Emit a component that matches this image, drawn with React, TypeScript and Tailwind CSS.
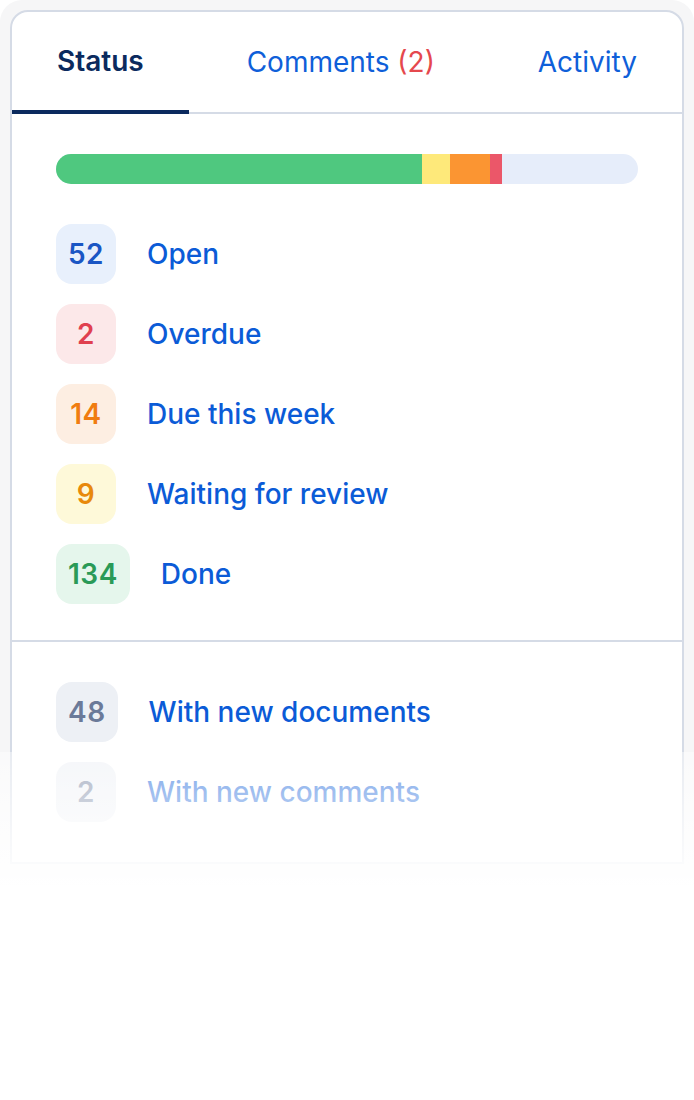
import React from 'react'

type Row = { count: number; label: string; badge: string }

const STATUS_ROWS: Row[] = [
  { count: 52, label: 'Open', badge: 'bg-[#e8f0fc] text-[#1a56c4]' },
  { count: 2, label: 'Overdue', badge: 'bg-[#fce8e9] text-[#e0404f]' },
  { count: 14, label: 'Due this week', badge: 'bg-[#fdeee2] text-[#f07c10]' },
  { count: 9, label: 'Waiting for review', badge: 'bg-[#fef9d9] text-[#e8890c]' },
  { count: 134, label: 'Done', badge: 'bg-[#e5f6ec] text-[#2a9a57]' },
]

const EXTRA_ROWS: Row[] = [
  { count: 48, label: 'With new documents', badge: 'bg-[#edf0f5] text-[#6b7a99]' },
  { count: 2, label: 'With new comments', badge: 'bg-[#edf0f5] text-[#6b7a99]' },
]

function StatusRow({ row }: { row: Row }) {
  return (
    <div className="flex items-center gap-[31px]">
      <span
        className={`h-[60px] min-w-[60px] px-[12px] rounded-[16px] flex items-center justify-center text-[28px] font-semibold tracking-[0.5px] ${row.badge}`}
      >
        {row.count}
      </span>
      <span className="text-[28px] font-medium text-[#0b5bd7]">{row.label}</span>
    </div>
  )
}

export default function App() {
  return (
    <div
      className="relative w-[694px] h-[1100px] bg-white"
      style={{ fontFamily: 'Inter, "Noto Sans", sans-serif' }}
    >
      <div className="bg-[#f6f6f7] rounded-t-[22px] pt-[10px] px-[10px] pb-[22px]">
        <div className="bg-white border-2 border-[#d5dbe6] rounded-t-[18px] overflow-hidden">
          {/* tabs */}
          <div className="flex justify-between border-b-2 border-[#d5dbe6]">
            <div className="h-[102px] -mb-[2px] px-[45px] flex items-center border-b-4 border-[#0b2a5e] text-[28px] font-semibold text-[#0b2a5e]">
              Status
            </div>
            <div className="h-[100px] px-[45px] flex items-center text-[28px] text-[#0f5fd9]">
              Comments&nbsp;<span className="text-[#e5484d]">(2)</span>
            </div>
            <div className="h-[100px] px-[45px] flex items-center text-[28px] text-[#0f5fd9]">
              Activity
            </div>
          </div>

          {/* progress + status list */}
          <div className="px-[44px] pt-[40px] pb-[36px] border-b-2 border-[#d5dbe6]">
            <div className="flex h-[30px] rounded-full overflow-hidden bg-[#e6edfa]">
              <div className="w-[366px] bg-[#4fc87f]" />
              <div className="w-[28px] bg-[#fee97a]" />
              <div className="w-[40px] bg-[#fb9532]" />
              <div className="w-[12px] bg-[#eb5769]" />
            </div>
            <div className="flex flex-col gap-[20px] mt-[40px]">
              {STATUS_ROWS.map(r => (
                <StatusRow key={r.label} row={r} />
              ))}
            </div>
          </div>

          {/* extra */}
          <div className="px-[44px] py-[40px] flex flex-col gap-[20px]">
            {EXTRA_ROWS.map(r => (
              <StatusRow key={r.label} row={r} />
            ))}
          </div>
        </div>
      </div>

      {/* fade */}
      <div className="absolute left-0 right-0 top-[752px] h-[140px] bg-gradient-to-b from-white/45 to-white" />
    </div>
  )
}
